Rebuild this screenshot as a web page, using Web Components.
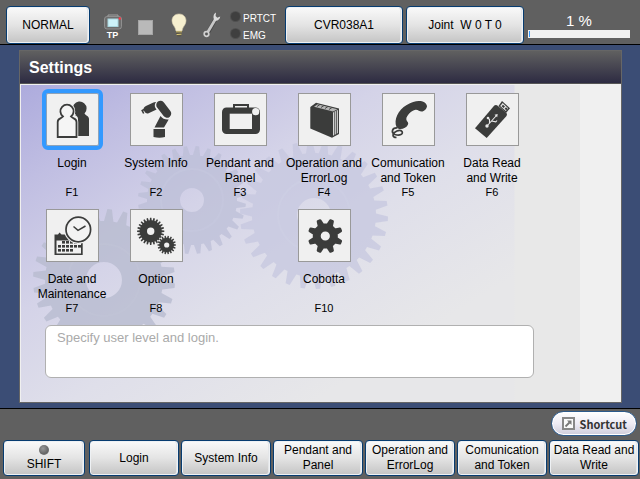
<!DOCTYPE html>
<html lang="en">
<head>
<meta charset="utf-8">
<title>Settings</title>
<style>
  html, body { margin: 0; height: 100%; }
  body { font-family: "Liberation Sans", Arial, sans-serif; font-size: 12px; line-height: 15px; color: #000; background: #3b4d75; }
</style>
</head>
<body>
<pendant-app></pendant-app>

<script>
/* Outline of a toothed wheel with a hole, as path data. */
function gear(cx, cy, outer, root, teeth, hole, turn = 0, tip = 0.2, base = 0.34) {
  const step = Math.PI * 2 / teeth, pts = [];
  const at = (r, a) => (cx + r * Math.cos(a)).toFixed(1) + ' ' + (cy + r * Math.sin(a)).toFixed(1);
  for (let i = 0; i < teeth; i++) {
    const a = turn + i * step;
    pts.push(at(root, a - base * step), at(outer, a - tip * step), at(outer, a + tip * step), at(root, a + base * step));
  }
  return `M${pts.join('L')}ZM${cx - hole} ${cy}a${hole} ${hole} 0 1 0 ${2 * hole} 0a${hole} ${hole} 0 1 0 ${-2 * hole} 0Z`;
}

const days = [[17,33],[21,33],[25,33],[29,33],[13,37],[17,37],[21,37],[25,37],[29,37],[33,37],[13,41],[17,41],[21,41],[25,41]]
  .map(([x, y]) => `<path d="M${x - 1} ${y - 1}h3v2.6h-3z"/>`).join('');

const ICONS = {
  login: `<path d="M30 21.500A7 7 0 1 1 38.500 20.500C40 23 43 23 43 26V43H32V26C32 24 31 23 29 22Z"/>
    <path d="M17 23.500A6.600 6.600 0 1 1 25 23.500C27 26 30.500 25 30.500 29V44H11.700V29C11.700 25 15 26 17 23.500Z" fill="#f2f2f2" stroke="#f2f2f2" stroke-width="3.500"/>
    <path d="M17 23.500A6.600 6.600 0 1 1 25 23.500C27 26 30.500 25 30.500 29V44H11.700V29C11.700 25 15 26 17 23.500Z" fill="#f5f5f5" stroke="#3b3c3b" stroke-width="1.800"/>`,
  robot: `<path d="M17.500 16.500L25 13" stroke="#3b3c3b" stroke-width="7.500" stroke-linecap="round"/>
    <path d="M15 16L12.200 17.500l1.500 3" fill="none" stroke="#3b3c3b" stroke-width="1.600"/>
    <path d="M30 12.500L36.500 20.500" stroke="#f0f0f0" stroke-width="10.500" stroke-linecap="round"/>
    <path d="M30.500 12L37 20.500" stroke="#3b3c3b" stroke-width="8.500" stroke-linecap="round"/>
    <path d="M30.500 23Q33.500 27 38.700 26.500L34 34.500H24.500Z"/><path d="M23.500 36H35V44Q29.500 45.500 23.500 44Z"/>`,
  pendant: `<path d="M20 15V12H34V15" fill="none" stroke="#3b3c3b" stroke-width="2"/>
    <rect x="8" y="14.500" width="38" height="26.500" rx="4.500"/><rect x="15.700" y="20.700" width="22.300" height="15.300" fill="#f0f0f0"/>
    <circle cx="41.700" cy="18.700" r="3.600" fill="#f0f0f0"/>`,
  book: `<path d="M12.300 14L18 9.700L41 15.500V41L34 44.700L12.300 35.500Z"/>
    <path d="M16 13.800L19.500 11.300L39.500 16.200L35 18.500Z" fill="#b5b5b5"/>
    <path d="M19 13.500l3-2M23 14.500l3-2M27 15.500l3-2M31 16.500l3-2" stroke="#4a4b4a" stroke-width="1"/>
    <path d="M35 19.500L40 17V40L35 42.700Z" fill="#d6d6d6"/><path d="M36.700 19V42M38.600 18V41" stroke="#4a4b4a" stroke-width=".9"/>`,
  phone: `<path d="M14.500 34C11.500 27 16 17 24.700 12C30 8.500 35 7.500 38.500 8C42.500 8.500 45 11 45 13.500C44.500 16 42.500 18 40.500 18.500C37.500 19 36.500 16.500 33.500 16.800C29.500 17.500 24.500 22.500 24.300 26C24.300 28.500 27 29 26 31.500C24.500 35 20 36.800 16.500 35.800Z"/>
    <path d="M15.500 35C9.500 34.500 9 40 13 41.500C18 43 21.500 41 20 38.500C18 36 11.500 38.500 11 42C11 44.500 13 44.500 14.500 44.500" fill="none" stroke="#3b3c3b" stroke-width="1.700"/>`,
  usb: `<path d="M28.300 12.500Q29.500 11.500 31 12.300L40.500 20Q41.500 21.500 40.500 23L20.700 45L9 35.300Z"/>
    <path d="M32.500 13L36 8L44 15.300L40 20Z"/><path d="M34.200 13L36.600 10L42.200 15.200L39.800 18Z" fill="#e8e8e8"/><path d="M36.300 12.400l2 1.900M39.300 15l1.700 1.600" stroke="#3b3c3b" stroke-width="2"/>
    <path d="M20.500 33.500L30.500 22.500M23.500 30V26.500L22.500 25.500M25.500 28L29.800 28.800L31 27.500" fill="none" stroke="#e8e8e8" stroke-width="1.100"/>
    <circle cx="21" cy="33" r="1.700" fill="#e8e8e8"/><circle cx="22" cy="25" r="1.300" fill="#e8e8e8"/><path d="M28.500 21.800l3.200-.8-.5 3.300z" fill="#e8e8e8"/>`,
  date: `<path d="M8.500 30V25.500H12L13.500 23.500L15.500 25.500H25V30H36.700V46H8.500Z"/><rect x="10.500" y="31.500" width="24.500" height="13" fill="#f0f0f0"/>${days}
    <circle cx="32.300" cy="20.500" r="14.300" fill="#f0f0f0"/><circle cx="32.300" cy="20.500" r="12.300" fill="#f3f3f3" stroke="#3b3c3b" stroke-width="1.700"/>
    <path d="M27.500 17.500L32 21.300L39.500 17" fill="none" stroke="#3b3c3b" stroke-width="1.500"/>`,
  gears: `<path fill-rule="evenodd" d="${gear(20.7, 22.3, 13.6, 11, 24, 3.7)}"/><circle cx="36.700" cy="36" r="9.500" fill="#f0f0f0"/><path fill-rule="evenodd" d="${gear(36.7, 36, 9.3, 7.2, 18, 2.6)}"/>`,
  cog: `<path fill-rule="evenodd" stroke="#3b3c3b" stroke-width="2.400" stroke-linejoin="round" d="${gear(27.3, 27, 16.4, 11.5, 8, 5.8, Math.PI / 8, 0.1, 0.24)}"/>`
};

const STATUS = {
  tp: `<svg width="20" height="16" viewBox="0 0 20 16"><path d="M5 2.500V1H15V2.500" fill="none" stroke="#a0a0a0"/><rect x="1.500" y="2.500" width="17" height="12.500" rx="2.500" fill="#6e6e6e" stroke="#999" stroke-width=".8"/><rect x="5" y="5" width="10" height="7.500" fill="#cdf3fa" stroke="#a9d6de"/><circle cx="16.800" cy="4.500" r="1.200" fill="#f34"/></svg>`,
  stop: `<svg width="15" height="15" viewBox="0 0 15 15"><rect x=".5" y=".5" width="14" height="14" fill="#b9b9b9" stroke="#a5a5a5"/></svg>`,
  bulb: `<svg width="16" height="25" viewBox="0 0 16 25"><path d="M8 1C3.500 1 1 4 1 7.800C1 12 4.500 13.500 5 18H11C11.500 13.500 15 12 15 7.800C15 4 12.500 1 8 1Z" fill="#f6efcf" stroke="#d8cfae" stroke-width=".6"/><path d="M5 18H11V21L9.500 23.500H6.500L5 21Z" fill="#5b5648"/><path d="M5 18.800L11 18.800M5.500 21.600L10.500 21.200" stroke="#d9c878"/></svg>`,
  wrench: `<svg width="20" height="28" viewBox="0 0 20 28"><path d="M13.500 8L6 21.500" stroke="#444" stroke-width="4"/><path d="M13.500 8L5.500 21.500" stroke="#c7c7c7" stroke-width="2.800"/><path d="M14 1.500C11 3 11 7 12.500 9.500C15 10.500 18 8.500 18.200 5.500L15.300 6.800L13.600 5Z" fill="#dcdcdc"/><circle cx="4.500" cy="23" r="2.300" fill="#555" stroke="#d0d0d0" stroke-width="1.700"/></svg>`
};

function define(name, html, setup) {
  const template = document.createElement('template');
  template.innerHTML = html;
  customElements.define(name, class extends HTMLElement {
    constructor() { super(); this.attachShadow({ mode: 'open' }).append(template.content.cloneNode(true)); }
    connectedCallback() { if (setup) setup(this, this.shadowRoot); }
  });
}

define('soft-key', `
<style>
  :host { display: block; min-width: 0; }
  button { box-sizing: border-box; width: 100%; height: 100%; min-height: 35px; padding: 0; margin: 0; font: inherit; color: #000;
    display: flex; flex-direction: column; align-items: center; justify-content: center; white-space: pre-line;
    border: 1px solid #073c70; border-radius: 4px; background: linear-gradient(#fafafa, #e4e4e4 50%, #c4c4c4); box-shadow: inset 0 0 0 1px #eef1f4, inset -1px 0 0 1px #e4e6e8; }
</style>
<button type="button"><slot></slot></button>`);

define('status-lamp', `
<style>
  :host { display: flex; align-items: center; gap: 3px; font-size: 10px; line-height: 17px; color: #fff; }
  i { width: 9px; height: 9px; border-radius: 50%; background: #3f3f3f; box-shadow: 0 0 0 1px #505050; margin: 0 0 5px 1px; }
</style>
<i></i><span><slot></slot></span>`);

define('status-icon', `
<style>
  :host { display: flex; flex-direction: column; align-items: center; justify-content: center; width: 33px; color: #fff; font-size: 9px; font-weight: bold; line-height: 10px; }
  svg { display: block; flex: none; }
</style>
<slot></slot>`, (el, root) => {
  if (!root.querySelector('svg')) root.querySelector('slot').insertAdjacentHTML('beforebegin', STATUS[el.getAttribute('name')]);
});

define('speed-meter', `
<style>
  :host { display: flex; flex-direction: column; color: #fff; font-size: 15px; line-height: 16px; text-align: center; padding: 7px 0 0; }
  .track { height: 8px; margin-top: 1px; background: #f0f0f0; box-sizing: border-box; padding: 1px; }
  .fill { width: 1%; min-width: 1px; height: 6px; background: #39f; }
</style>
<slot></slot><div class="track"><div class="fill"></div></div>`);

define('status-bar', `
<style>
  :host { display: grid; grid-template-columns: 84fr 195fr 118fr 3fr 118fr 4fr 102fr; height: 44px; box-sizing: border-box; padding: 6px 10px 3px 6px;
    background: #606060; flex: none; }
  .status { display: flex; padding-left: 6px; }
  .lamps { display: flex; flex-direction: column; padding: 4px 0 0 2px; }
  .lamps, .status { min-width: 0; }
  .mode { grid-column: 5; }
  .speed { grid-column: 7; }
  status-icon[name=stop], status-icon[name=tp] { padding-top: 4px; }
</style>
<soft-key>NORMAL</soft-key>
<div class="status">
  <status-icon name="tp">TP</status-icon><status-icon name="stop"></status-icon><status-icon name="bulb"></status-icon><status-icon name="wrench"></status-icon>
  <div class="lamps"><status-lamp>PRTCT</status-lamp><status-lamp>EMG</status-lamp></div>
</div>
<soft-key>CVR038A1</soft-key>
<soft-key class="mode">Joint&nbsp; W 0 T 0</soft-key>
<speed-meter class="speed">1 %</speed-meter>`);

define('menu-tile', `
<style>
  :host { display: block; min-width: 0; }
  button { width: 100%; padding: 0; margin: 0; border: 0; background: none; font: inherit; color: #000; display: flex; flex-direction: column; align-items: center; }
  .icon { box-sizing: border-box; width: 53px; height: 53px; border: 1px solid #999; background: #f0f0f0; }
  :host([selected]) .icon { outline: 4px solid #39f; border-radius: 2px; border-color: #8fa3b8; }
  svg { display: block; width: 51px; height: 51px; }
  .label { margin-top: 10px; min-height: 30px; white-space: pre-line; }
  .key { font-size: 11px; line-height: 12px; }
</style>
<button type="button"><span class="icon"></span><span class="label"><slot></slot></span><span class="key"></span></button>`, (el, root) => {
  root.querySelector('.icon').innerHTML = `<svg viewBox="1 1 51 51" fill="#3b3c3b" aria-hidden="true">${ICONS[el.getAttribute('icon')]}</svg>`;
  root.querySelector('.key').textContent = el.getAttribute('key');
});

define('gear-backdrop', `
<style>
  :host { display: block; position: absolute; inset: 1px 41px 0 1px; overflow: hidden;
    background: linear-gradient(90deg, transparent calc(100% - 66px), #e8e8e8 calc(100% - 65px)), linear-gradient(148deg, #adabdd 0, #c0bee2 15%, #d4d3e8 34%, #dfdfea 52%, #e7e7e9 75%); }
  svg { display: block; width: 559px; height: 317px; }
</style>
<svg viewBox="21 85 559 317" fill-rule="evenodd" stroke-linejoin="round" aria-hidden="true">
  <path fill="#c5c7df" opacity=".75" d="${gear(314, 215, 74, 62, 30, 17, 0.05, 0.14, 0.36)}"/>
  <circle cx="314" cy="215" r="36" fill="none" stroke="#d0d2e6" stroke-width="2" opacity=".4"/>
  <path fill="#bbbdd6" opacity=".7" d="${gear(192, 200, 54, 45, 28, 12, 0.1, 0.14, 0.36)}"/>
  <circle cx="192" cy="200" r="31" fill="none" stroke="#c8cae0" stroke-width="2" opacity=".4"/>
  <path fill="#b8bbd0" opacity=".8" d="${gear(104, 280, 71, 59, 28, 18, 0.08, 0.14, 0.36)}"/>
  <circle cx="104" cy="280" r="36" fill="none" stroke="#c3c5d8" stroke-width="2" opacity=".4"/>
</svg>`);

define('settings-panel', `
<style>
  :host { display: flex; flex-direction: column; flex: 1; box-sizing: border-box; border: 1px solid #666; background: #f0f0f0; }
  h1 { margin: 0; padding: 0 9px; font-size: 16px; line-height: 34px; height: 32px; color: #fff; background: linear-gradient(#606060, #2d2b42); border-bottom: 1px solid #555; }
  .content { position: relative; flex: 1; padding: 9px 0; }
  .grid { position: relative; display: grid; grid-template-columns: repeat(6, minmax(0, 84px)); row-gap: 11px; padding-left: 10px; }
  .grid > * { min-height: 105px; }
  p { position: relative; box-sizing: border-box; margin: 11px 87px 0 25px; min-height: 53px; padding: 4px 11px; font-size: 13px; line-height: 16px; color: #aaa;
    background: #fff; border: 1px solid #b0b0b0; border-radius: 6px; }
</style>
<h1>Settings</h1>
<div class="content">
  <gear-backdrop></gear-backdrop>
  <div class="grid">
    <menu-tile icon="login" key="F1" selected>Login</menu-tile>
    <menu-tile icon="robot" key="F2">System Info</menu-tile>
    <menu-tile icon="pendant" key="F3">Pendant and
Panel</menu-tile>
    <menu-tile icon="book" key="F4">Operation and
ErrorLog</menu-tile>
    <menu-tile icon="phone" key="F5">Comunication
and Token</menu-tile>
    <menu-tile icon="usb" key="F6">Data Read
and Write</menu-tile>
    <menu-tile icon="date" key="F7">Date and
Maintenance</menu-tile>
    <menu-tile icon="gears" key="F8">Option</menu-tile>
    <span></span>
    <menu-tile icon="cog" key="F10">Cobotta</menu-tile>
  </div>
  <p>Specify user level and login.</p>
</div>`);

define('shortcut-button', `
<style>
  :host { display: block; }
  button { box-sizing: border-box; height: 25px; padding: 0 9px 0 10px; display: flex; align-items: center; gap: 5px; border: 1px solid #2c5a8c; border-radius: 13px;
    background: linear-gradient(#fff, #eeecf5 50%, #cfcddb); box-shadow: inset 0 0 0 1px #fff; font: bold 11px/20px "Noto Sans CJK JP", sans-serif; color: #333; }
  svg { display: block; }
</style>
<button type="button"><svg width="13" height="13" viewBox="0 0 13 13" aria-hidden="true"><rect x="1" y="1" width="11" height="11" fill="#fafafa" stroke="#888" stroke-width="2"/><path d="M3.500 9.500L7.500 5.500" stroke="#777" stroke-width="1.800"/><path d="M5 3.500H9.500V8Z" fill="#777"/></svg><slot></slot></button>`);

define('key-bar', `
<style>
  :host { display: block; flex: none; background: #606060; padding: 2px 1px 3px 3px; }
  .top { display: flex; justify-content: flex-end; padding-right: 2px; margin-bottom: 4px; }
  .keys { display: flex; gap: 4px; }
  .shift { flex: 82; }
  nav { flex: 550; min-width: 0; display: grid; grid-template-columns: repeat(6, minmax(0, 1fr)); gap: 2px; }
  soft-key { height: 36px; white-space: nowrap; }
  .led { width: 10px; height: 10px; margin-bottom: 2px; border-radius: 50%; background: radial-gradient(circle at 40% 35%, #999, #666 60%, #888); }
</style>
<div class="top"><shortcut-button>Shortcut</shortcut-button></div>
<div class="keys">
  <soft-key class="shift"><span class="led"></span><span>SHIFT</span></soft-key>
  <nav>
    <soft-key>Login</soft-key>
    <soft-key>System Info</soft-key>
    <soft-key>Pendant and
Panel</soft-key>
    <soft-key>Operation and
ErrorLog</soft-key>
    <soft-key>Comunication
and Token</soft-key>
    <soft-key>Data Read and
Write</soft-key>
  </nav>
</div>`);

define('pendant-app', `
<style>
  :host { display: flex; flex-direction: column; min-height: 100vh; }
  main { flex: 1; display: flex; padding: 5px 18px 5px 19px; background: #3b4d75; border: solid #000; border-width: 1px 0; }
</style>
<status-bar></status-bar>
<main><settings-panel></settings-panel></main>
<key-bar></key-bar>`);
</script>
</body>
</html>
